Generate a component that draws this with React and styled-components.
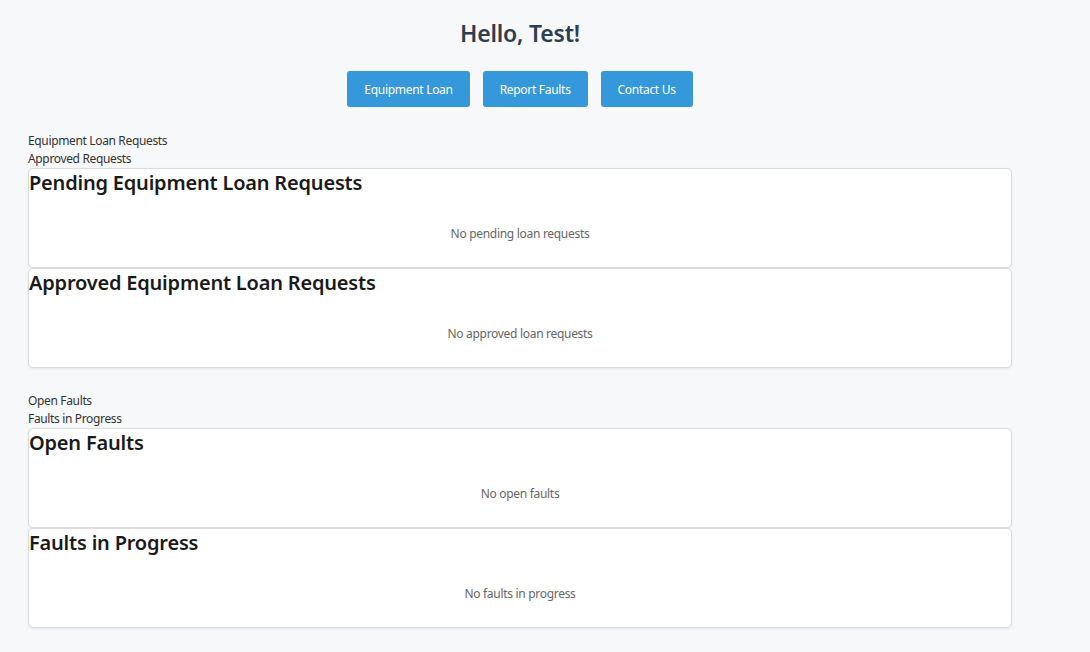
import styled, { createGlobalStyle } from "styled-components"

const Global = createGlobalStyle`
body {
  margin: 0;
  background: #f7f8fa;
  font-family: "Noto Sans", "Open Sans", sans-serif;
  color: #333;
}
`

const Page = styled.div`
width: 984px;
padding: 0 28px 24px;
`

const Title = styled.h1`
margin: 0;
padding-top: 16px;
text-align: center;
font-size: 23px;
font-weight: 600;
letter-spacing: -0.2px;
color: #2c3e50;
line-height: 34px;
`

const Nav = styled.div`
display: flex;
justify-content: center;
gap: 13px;
margin-top: 21px;
`

const NavButton = styled.button`
height: 36px;
padding: 0 17px;
border: none;
border-radius: 3px;
background: #3498db;
color: #fff;
font-family: inherit;
font-size: 12px;
letter-spacing: -0.3px;
cursor: pointer;
`

const Group = styled.section`
margin-top: ${p => p.$top || 26}px;
`

const Label = styled.div`
font-size: 12px;
letter-spacing: -0.35px;
line-height: 18px;
color: #333;
`

const Card = styled.div`
height: 98px;
background: #fff;
border: 1px solid #dcdcdc;
border-radius: 5px;
box-shadow: 0 1px 3px rgba(0, 0, 0, 0.08);
`

const CardTitle = styled.h2`
margin: 0;
padding-top: 1px;
font-size: 20px;
font-weight: 600;
letter-spacing: -0.2px;
line-height: 26px;
color: #1a1a1a;
`

const Empty = styled.p`
margin: 0;
padding-top: 29px;
text-align: center;
font-size: 12px;
letter-spacing: -0.3px;
line-height: 18px;
color: #666;
`

const sections = [
    {
        labels: ["Equipment Loan Requests", "Approved Requests"],
        cards: [
            ["Pending Equipment Loan Requests", "No pending loan requests"],
            ["Approved Equipment Loan Requests", "No approved loan requests"],
        ],
    },
    {
        labels: ["Open Faults", "Faults in Progress"],
        cards: [
            ["Open Faults", "No open faults"],
            ["Faults in Progress", "No faults in progress"],
        ],
    },
]

const App = () => {
    return (
        <Page>
            <Global />
            <Title>Hello, Test!</Title>
            <Nav>
                <NavButton>Equipment Loan</NavButton>
                <NavButton>Report Faults</NavButton>
                <NavButton>Contact Us</NavButton>
            </Nav>

            {sections.map((s, i) => (
                <Group key={i} $top={i === 0 ? 25 : 24}>
                    {s.labels.map(l => <Label key={l}>{l}</Label>)}
                    {s.cards.map(([t, m]) => (
                        <Card key={t}>
                            <CardTitle>{t}</CardTitle>
                            <Empty>{m}</Empty>
                        </Card>
                    ))}
                </Group>
            ))}
        </Page>
    )
}
export default App
